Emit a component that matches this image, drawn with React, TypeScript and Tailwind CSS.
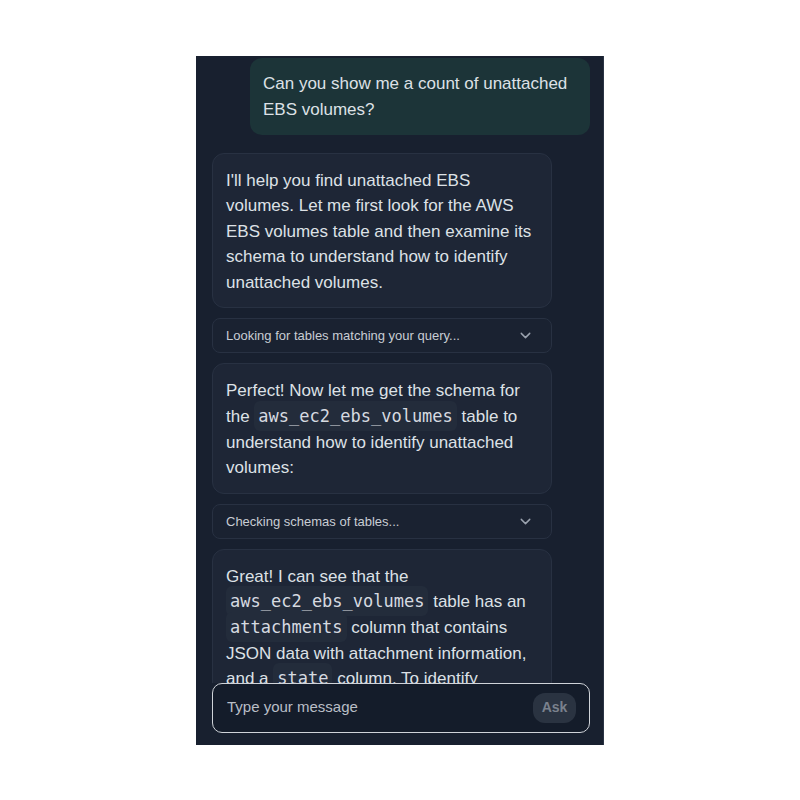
import { ChevronDown } from "lucide-react";

const sans = "font-['Liberation_Sans',Arial,sans-serif]";
const mono = "font-['DejaVu_Sans_Mono',monospace]";

function Code({ children }: { children: React.ReactNode }) {
  return (
    <code className={`${mono} rounded-md bg-[#232c3b] px-[4px] py-[5px] text-[17px] leading-none text-[#d6dae0]`}>
      {children}
    </code>
  );
}

function Bubble({ children }: { children: React.ReactNode }) {
  return (
    <div className="w-[340px] shrink-0 rounded-xl border border-[#283142] bg-[#1e2636] px-[13px] pt-[14px] pb-[12px] text-[17px] leading-[25.6px] text-[#dde1e6]">
      {children}
    </div>
  );
}

function ToolRow({ label }: { label: string }) {
  return (
    <div className="flex h-[35px] w-[340px] shrink-0 items-center justify-between rounded-lg border border-[#283142] bg-[#1a2231] pl-[13px] pr-[17px] text-[13px] text-[#c8cdd4]">
      <span>{label}</span>
      <ChevronDown size={17} strokeWidth={2} className="text-[#9aa2ae]" />
    </div>
  );
}

export default function App() {
  return (
    <div className={`${sans} flex min-h-screen items-center justify-center bg-white`}>
      <div className="flex h-[689px] w-[408px] flex-col border-r border-[#2b3444] bg-[#18202f]">
        <div className="flex min-h-0 flex-1 flex-col gap-[10px] overflow-hidden pt-[2px] pl-4 pr-[13px]">
          <div className="flex shrink-0 justify-end">
            <div className="w-[340px] rounded-xl bg-[#1c3438] px-[13px] pt-[13px] pb-[12px] text-[17px] leading-[26px] text-[#dde1e6]">
              Can you show me a count of unattached EBS volumes?
            </div>
          </div>
          <div className="mt-2 shrink-0">
            <Bubble>
              I'll help you find unattached EBS volumes. Let me first look for the AWS EBS volumes table and then
              examine its schema to understand how to identify unattached volumes.
            </Bubble>
          </div>
          <ToolRow label="Looking for tables matching your query..." />
          <Bubble>
            Perfect! Now let me get the schema for the <Code>aws_ec2_ebs_volumes</Code> table to understand how to
            identify unattached volumes:
          </Bubble>
          <ToolRow label="Checking schemas of tables..." />
          <Bubble>
            Great! I can see that the <Code>aws_ec2_ebs_volumes</Code> table has an <Code>attachments</Code> column
            that contains JSON data with attachment information, and a <Code>state</Code> column. To identify
            unattached volumes, I'll count the rows where attachments is empty.
          </Bubble>
        </div>
        <div className="shrink-0 pl-4 pr-[13px] pb-3">
          <div className="flex h-[50px] items-center justify-between rounded-[10px] border-[1.5px] border-[#cfd3d9] bg-[#141c2a] pl-[14px] pr-[13px]">
            <span className="text-[15px] text-[#b9bec6]">Type your message</span>
            <button className="flex h-[30px] w-[43px] items-center justify-center rounded-[12px] bg-[#2a3341] text-[14px] font-bold text-[#7a818d]">
              Ask
            </button>
          </div>
        </div>
      </div>
    </div>
  );
}
